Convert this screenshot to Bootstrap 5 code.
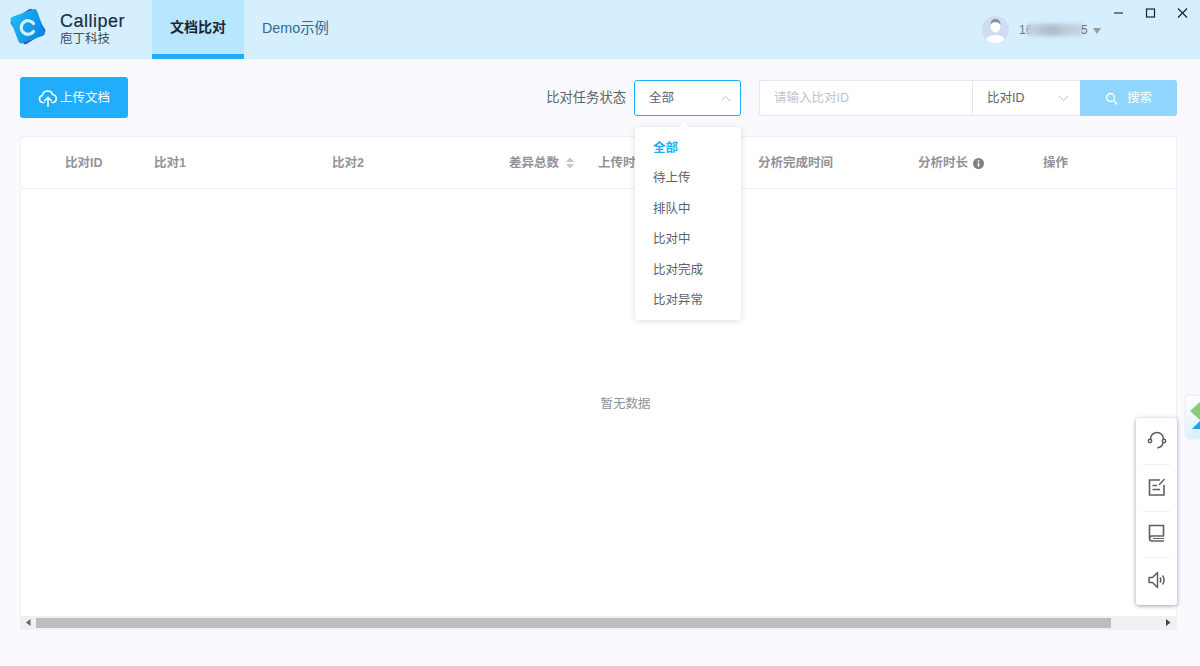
<!DOCTYPE html>
<html lang="zh">
<head>
<meta charset="utf-8">
<title>Calliper</title>
<link href="https://cdn.jsdelivr.net/npm/bootstrap@5.3.0/dist/css/bootstrap.min.css" rel="stylesheet">
<style>
html,body{height:666px;overflow:hidden}
body{background:#fafafe;font-family:"Liberation Sans","Noto Sans CJK SC",sans-serif;font-size:12.5px;color:#606266;position:relative;width:1200px}
.top-bar{height:59px;background:#d6efff}
.brand-box{width:152px;padding-left:8px;gap:10px;padding-bottom:1px}
.brand-name{font-size:18px;line-height:21px;color:#152f45;font-weight:500;letter-spacing:.5px;-webkit-text-stroke:.2px #152f45}
.brand-sub{font-size:12.5px;line-height:15px;color:#3b4c5c}
.tab-item{height:59px;font-size:14.3px;color:#2f6b8f;padding:0 18px 3px;line-height:1}
.tab-on{width:92px;background:#b9e6ff;border-bottom:5px solid #20aefc;color:#1a2730;font-size:14px;font-weight:700;padding:0;justify-content:center}
.user-box{position:absolute;left:982px;top:16px;height:27px;gap:10px;font-size:12px;color:#68788a}
.avatar-dot{width:27px;height:27px;border-radius:50%;overflow:hidden;display:block}
.blur-num{position:relative;width:68px;height:14px;line-height:14px;display:block;color:#68788a}
.blur-smear{position:absolute;left:8px;top:1px;width:56px;height:12px;background:linear-gradient(90deg,#c4d5e0,#a9bccb 45%,#bccdd9 70%,#c4d5e0);filter:blur(2px)}
.caret-down{width:0;height:0;border:4.5px solid transparent;border-top:6px solid #9a9a9a;border-bottom:0;margin-left:-4px;margin-top:2px}
.win-btns{position:absolute;left:1113px;top:6px;gap:20px}
.win-btns svg{display:block}
.tool-row{height:77px;padding:18px 23px 0 20px}
.upload-btn{width:108px;height:41px;background:#20aefc;border-radius:3px;border:0;color:#fff;font-size:12.5px;gap:2px;padding:1px 0 0 0}
.state-label{font-size:13.3px;color:#606266;margin-right:8px}
.select-open{width:107px;height:36px;margin-top:3px;background:#fff;border:1px solid #20aefc;border-radius:3px;padding:1px 9px 0 14px;color:#606266}
.search-group{width:418px;height:36px;margin:3px 0 0 18px;border:1px solid #e4e7ed;border-right:0;border-radius:3px;background:#fff}
.search-field{width:213px;padding-left:14px;color:#c0c4cc;border-right:1px solid #e4e7ed;line-height:34px}
.search-type{width:107px;padding:1px 11px 0 14px;color:#606266}
.search-go{flex:1;margin:-1px 0;background:#91d6fe;color:#fff;gap:8px;border-radius:0 3px 3px 0;padding-top:1px}
.list-box{margin:0 23px 0 20px;height:494px;background:#fff;border:1px solid #eef0f6;border-radius:3px 3px 0 0;display:flex;flex-direction:column}
.head-row{height:52px;border-bottom:1px solid #eef0f6;color:#909399;font-weight:700;padding-top:1px}
.cell-id{width:133px;padding-left:44px}
.cell-a{width:178px}
.cell-b{width:177px}
.cell-c{width:89px;gap:6px}
.cell-d{width:160px}
.cell-e{width:160px}
.cell-f{width:125px;gap:5px}
.empty-zone{flex:1;color:#909399;padding:3px 0 0 54px}
.scroll-strip{height:13px;background:#f0f0f0}
.scroll-btn{width:15px}
.scroll-thumb{margin:2px 0 1px;background:#bdbdbd;width:1075px;height:10px}
.scroll-rest{flex:1}
.drop-menu{position:absolute;left:635px;top:127px;width:106px;height:193px;background:#fff;border-radius:3px;box-shadow:0 1px 6px rgba(60,70,100,.18);padding:6px 0;z-index:5}
.drop-menu::before{content:"";position:absolute;left:44px;top:-5px;border:5px solid transparent;border-top:0;border-bottom-color:#fff}
.drop-line{height:30.4px;line-height:30.4px;padding-left:18px;color:#606266}
.drop-on{color:#20aefc;font-weight:700}
.float-tools{position:absolute;left:1136px;top:418px;width:41px;height:187px;background:#fff;border-radius:3px;box-shadow:0 1px 4px rgba(50,70,120,.5);z-index:6;padding:0 7px}
.float-cell{height:46.4px;padding-bottom:2px}
.float-cell+.float-cell{border-top:1px solid #eef0f4}
.side-peek{position:absolute;left:1186px;top:396px;width:14px;height:42px;background:linear-gradient(160deg,#fff,#d8f0fd);border-radius:3px 0 0 3px;box-shadow:0 0 3px rgba(60,70,100,.2);overflow:hidden}
.side-peek svg{display:block}
</style>
</head>
<body>
<header class="top-bar d-flex">
  <div class="brand-box d-flex align-items-center">
    <svg width="42" height="42" viewBox="0 0 42 42">
      <defs><linearGradient id="lg" x1="0" y1="0" x2="1" y2="1"><stop offset="0" stop-color="#1fbcf8"/><stop offset="1" stop-color="#0c80e4"/></linearGradient></defs>
      <rect x="7" y="4.500" width="26" height="28" rx="3" transform="rotate(-32 20 18.500)" fill="#2a5db0"/>
      <rect x="5.750" y="4.250" width="28" height="28" rx="3" transform="rotate(-20 19.750 18.250)" fill="url(#lg)"/>
      <path d="M25.500 15.500a6.800 6.800 0 1 0 0 8" fill="none" stroke="#d5f0fd" stroke-width="3.200" stroke-linecap="round"/>
    </svg>
    <div>
      <div class="brand-name">Calliper</div>
      <div class="brand-sub">庖丁科技</div>
    </div>
  </div>
  <div class="tab-item tab-on d-flex align-items-center">文档比对</div>
  <div class="tab-item d-flex align-items-center">Demo示例</div>
</header>
<div class="user-box d-flex align-items-center">
  <svg class="avatar-dot" viewBox="0 0 27 27"><rect width="27" height="27" fill="#cfdcf3"/><ellipse cx="13.500" cy="10.500" rx="5" ry="6" fill="#fff"/><path d="M8.500 9c0-4 2-6 5-6s5 2 5 6c-1-2-3-3-5-3s-4 1-5 3z" fill="#8a8f9c"/><path d="M3 27c1-6 5-8 10.500-8S23 21 24 27z" fill="#fff"/></svg>
  <span class="blur-num"><span>16</span><span class="blur-smear"></span><span class="position-absolute" style="left:62px">5</span></span>
  <span class="caret-down"></span>
</div>
<div class="win-btns d-flex">
  <svg width="12" height="14" viewBox="0 0 12 14"><path d="M1 7h9" stroke="#333" stroke-width="1.200"/></svg>
  <svg width="11" height="14" viewBox="0 0 11 14"><rect x="1.500" y="3" width="8" height="8" fill="none" stroke="#222" stroke-width="1.200"/></svg>
  <svg width="11" height="14" viewBox="0 0 11 14" style="margin-left:1px"><path d="M1 2.500l9 9M10 2.500l-9 9" stroke="#222" stroke-width="1.200"/></svg>
</div>

<section class="tool-row d-flex align-items-start">
  <button class="upload-btn d-flex align-items-center justify-content-center" type="button">
    <svg width="20" height="20" viewBox="0 0 20 20" fill="none" stroke="#fff" stroke-width="1.500" stroke-linecap="round" stroke-linejoin="round"><path d="M6 14.500H4.800A3.600 3.600 0 0 1 4.300 7.400a5.400 5.400 0 0 1 10.500-.6 3.900 3.900 0 0 1 .3 7.700H14"/><path d="M10 18.500V9.500M6.800 12.500L10 9.300l3.200 3.200"/></svg>
    <span>上传文档</span>
  </button>
  <div class="ms-auto d-flex align-items-center" style="height:41px"><span class="state-label">比对任务状态</span></div>
  <div class="select-open d-flex align-items-center justify-content-between">
    <span>全部</span>
    <svg width="11" height="7" viewBox="0 0 11 7"><path d="M1 6l4.500-4.500L10 6" fill="none" stroke="#c0c4cc" stroke-width="1"/></svg>
  </div>
  <div class="search-group d-flex">
    <div class="search-field">请输入比对ID</div>
    <div class="search-type d-flex align-items-center justify-content-between">
      <span>比对ID</span>
      <svg width="11" height="7" viewBox="0 0 11 7"><path d="M1 1l4.500 4.500L10 1" fill="none" stroke="#c0c4cc" stroke-width="1"/></svg>
    </div>
    <div class="search-go d-flex align-items-center justify-content-center">
      <svg width="14" height="14" viewBox="0 0 14 14" fill="none" stroke="#fff" stroke-width="1.300"><circle cx="5.500" cy="5.500" r="4"/><path d="M8.500 8.500l4 4"/></svg>
      <span>搜索</span>
    </div>
  </div>
</section>

<main class="list-box">
  <div class="head-row d-flex align-items-center">
    <div class="cell-id">比对ID</div>
    <div class="cell-a">比对1</div>
    <div class="cell-b">比对2</div>
    <div class="cell-c d-flex align-items-center">差异总数
      <svg width="10" height="12" viewBox="0 0 10 12"><path d="M5 .5L9 5H1zM5 11.500L1 7h8z" fill="#c0c4cc"/></svg>
    </div>
    <div class="cell-d">上传时间</div>
    <div class="cell-e">分析完成时间</div>
    <div class="cell-f d-flex align-items-center">分析时长
      <svg width="11" height="11" viewBox="0 0 11 11"><circle cx="5.500" cy="5.500" r="5.500" fill="#7d8088"/><rect x="4.700" y="4.800" width="1.600" height="3.900" fill="#fff"/><rect x="4.700" y="2.400" width="1.600" height="1.500" fill="#fff"/></svg>
    </div>
    <div>操作</div>
  </div>
  <div class="empty-zone d-flex align-items-center justify-content-center">暂无数据</div>
  <div class="scroll-strip d-flex align-items-center">
    <div class="scroll-btn d-flex justify-content-center"><svg width="5" height="7" viewBox="0 0 5 7"><path d="M4.500 0v7L0 3.500z" fill="#666"/></svg></div>
    <div class="scroll-thumb"></div>
    <div class="scroll-rest"></div>
    <div class="scroll-btn d-flex justify-content-center"><svg width="5" height="7" viewBox="0 0 5 7"><path d="M0 0v7l4.500-3.500z" fill="#444"/></svg></div>
  </div>
</main>

<div class="drop-menu">
  <div class="drop-line drop-on">全部</div>
  <div class="drop-line">待上传</div>
  <div class="drop-line">排队中</div>
  <div class="drop-line">比对中</div>
  <div class="drop-line">比对完成</div>
  <div class="drop-line">比对异常</div>
</div>

<aside class="float-tools">
  <div class="float-cell d-flex align-items-center justify-content-center">
    <svg width="20" height="20" viewBox="0 0 20 20" fill="none" stroke="#5f5f5f" stroke-width="1.500" stroke-linecap="round"><path d="M3.500 9.500V9a6.500 6.500 0 0 1 13 0v.5"/><circle cx="3" cy="11" r="1.700"/><circle cx="17" cy="11" r="1.700"/><path d="M15.800 13.500c-.7 2.700-2.500 4-5 4.300"/></svg>
  </div>
  <div class="float-cell d-flex align-items-center justify-content-center">
    <svg width="20" height="20" viewBox="0 0 20 20" fill="none" stroke="#5f5f5f" stroke-width="1.600"><path d="M13 3H2.500v15H17V8"/><path d="M5.500 8.500H10M5.500 12.500H13"/><path d="M12 8l5.500-6" stroke-width="1.400"/></svg>
  </div>
  <div class="float-cell d-flex align-items-center justify-content-center">
    <svg width="20" height="20" viewBox="0 0 20 20" fill="none" stroke="#5f5f5f" stroke-width="1.600"><path d="M2.500 15.500V2.500h14V13H5a2.300 2.300 0 0 0 0 5h12"/><path d="M6 15.500h11" stroke-width="1"/></svg>
  </div>
  <div class="float-cell d-flex align-items-center justify-content-center">
    <svg width="20" height="20" viewBox="0 0 20 20" fill="none" stroke="#5f5f5f" stroke-width="1.500" stroke-linejoin="round"><path d="M2 7.500v5h3.500l5 5V2.500l-5 5z"/><path d="M13 7.500c1 1.500 1 3.500 0 5"/><path d="M15.500 5.500c2 2.700 2 6.300 0 9"/></svg>
  </div>
</aside>

<div class="side-peek">
  <svg width="14" height="42" viewBox="0 0 14 42"><path d="M4 15L14 6v18z" fill="#8ccc76"/><path d="M6 33l8-8v8z" fill="#1aa4ef"/></svg>
</div>
<script src="https://cdn.jsdelivr.net/npm/bootstrap@5.3.0/dist/js/bootstrap.bundle.min.js"></script>
</body>
</html>
